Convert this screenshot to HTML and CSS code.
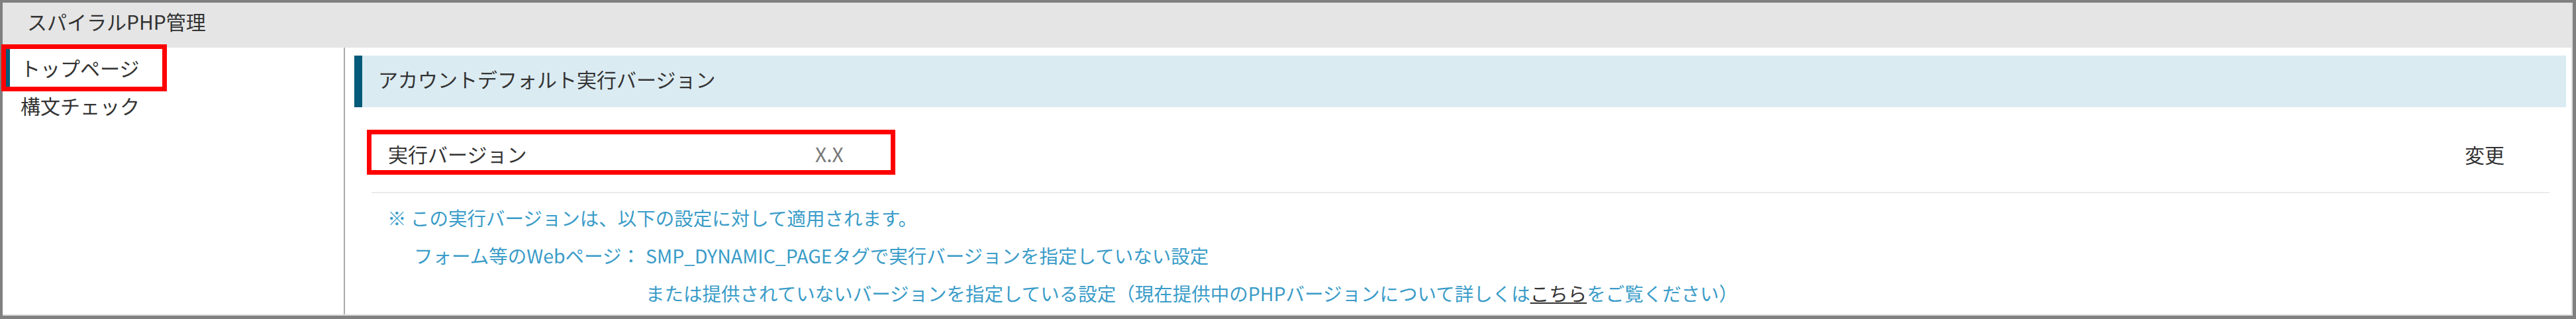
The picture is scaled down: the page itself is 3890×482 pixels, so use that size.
FILE: index.html
```html
<html>

<head>
    <meta charset="utf-8">
    <meta name="viewport" content="width=device-width, initial-scale=1.0">
    <link rel="stylesheet" href="styles.css">
</head>

<body>
    <div class="window">
        <div class="shell">
            <div class="topbar">スパイラルPHP管理</div>

            <div class="content">
                <nav class="sidebar">
                    <a class="navitem current marked">トップページ</a>
                    <a class="navitem">構文チェック</a>
                </nav>

                <main class="main">
                    <h2 class="section-title">アカウントデフォルト実行バージョン</h2>

                    <div class="version-row">
                        <div class="version-info marked">
                            <span class="version-label">実行バージョン</span>
                            <span class="version-value">X.X</span>
                        </div>
                        <a class="change">変更</a>
                    </div>

                    <div class="note">
                        <p>※ この実行バージョンは、以下の設定に対して適用されます。</p>
                        <dl class="scope">
                            <dt>フォーム等のWebページ：</dt>
                            <dd>
                                <div>SMP_DYNAMIC_PAGEタグで実行バージョンを指定していない設定</div>
                                <div>または提供されていないバージョンを指定している設定（現在提供中のPHPバージョンについて詳しくは<a class="link">こちら</a>をご覧ください）</div>
                            </dd>
                        </dl>
                    </div>
                </main>
            </div>
        </div>
    </div>
</body>

</html>
```

FILE: styles.css
```css
:root {
    --bar-color: #045a79;
    --text-color: #333333;
    --note-color: #3a9cc8;
    font-family: "Noto Sans CJK JP", "Noto Sans", sans-serif;
}

body {
    margin: 0px;
    background-color: white;
    color: var(--text-color);
}

/* outer window frame */
.window {
    height: 482px;
    box-sizing: border-box;
    border-style: solid;
    border-color: #808080;
    border-width: 4px 5px 5px 4px;
    display: flex;
}

.shell {
    flex: 1;
    display: flex;
    flex-direction: column;
    border-right: 2px solid #dcdcdc;
    border-bottom: 2px solid #dcdcdc;
}

.topbar {
    height: 68px;
    box-sizing: border-box;
    background-color: #e5e5e5;
    padding-left: 37px;
    font-size: 30px;
    line-height: 56px;
}

.content {
    flex: 1;
    display: flex;
    flex-direction: row;
}

/* red annotation boxes */
.marked {
    outline: 7px solid #ff0000;
}

.sidebar {
    width: 517px;
    box-sizing: border-box;
    border-right: 2px solid #a8a8a8;
    padding-top: 2px;
    display: flex;
    flex-direction: column;
    align-items: flex-start;
}

.navitem {
    display: block;
    width: 236px;
    height: 57px;
    box-sizing: border-box;
    margin-left: 5px;
    border-left: 6px solid transparent;
    padding-left: 16px;
    font-size: 30px;
    line-height: 57px;
    color: var(--text-color);
}

.navitem.current {
    border-left-color: var(--bar-color);
}

.main {
    flex: 1;
    padding: 12px 8px 0px 14px;
}

.section-title {
    margin: 0;
    height: 78px;
    box-sizing: border-box;
    background-color: #dbebf2;
    border-left: 12px solid var(--bar-color);
    padding-left: 24px;
    font-size: 30px;
    font-weight: normal;
    line-height: 70px;
}

.version-row {
    display: flex;
    flex-direction: row;
    justify-content: space-between;
    align-items: flex-start;
    margin: 41px 25px 0px 26px;
    padding-bottom: 32px;
    border-bottom: 2px solid #ebebeb;
    font-size: 30px;
}

.version-info {
    width: 784px;
    height: 54px;
    box-sizing: border-box;
    padding-top: 5px;
    line-height: 49px;
    display: flex;
}

.version-label {
    width: 645px;
    padding-left: 25px;
}

.version-value {
    color: #777777;
}

.change {
    padding-top: 6px;
    line-height: 49px;
    margin-right: 68px;
    color: var(--text-color);
}

.note {
    margin: 8px 0px 0px 50px;
    font-size: 28.5px;
    line-height: 57px;
    color: var(--note-color);
}

.note p {
    margin: 0;
}

.scope {
    margin: 0;
    padding-left: 40px;
    display: grid;
    grid-template-columns: auto 1fr;
    column-gap: 8px;
}

.scope dt,
.scope dd {
    margin: 0;
}

.link {
    color: var(--text-color);
    text-decoration: underline;
}
```
